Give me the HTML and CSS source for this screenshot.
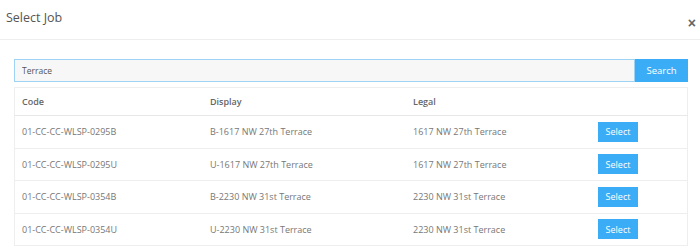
FILE: index.html
```html
<!DOCTYPE html>
<html lang="en">
<head>
    <meta charset="UTF-8">
    <meta name="viewport" content="width=device-width, initial-scale=1.0">
    <title>Select Job</title>
    <link rel="stylesheet" href="styles.css">
</head>
<body>
    <div class="modal">
        <div class="modal-header">
            <h4 class="modal-title">Select Job</h4>
            <button class="close">&times;</button>
        </div>
        <div class="modal-body">
            <div class="search-bar">
                <input class="search-input" type="text" value="Terrace">
                <button class="search-btn">Search</button>
            </div>
            <table class="jobs">
                <thead>
                    <tr>
                        <th class="col-code">Code</th>
                        <th class="col-display">Display</th>
                        <th class="col-legal">Legal</th>
                        <th></th>
                    </tr>
                </thead>
                <tbody>
                    <tr>
                        <td>01-CC-CC-WLSP-0295B</td>
                        <td>B-1617 NW 27th Terrace</td>
                        <td>1617 NW 27th Terrace</td>
                        <td><button class="select-btn">Select</button></td>
                    </tr>
                    <tr>
                        <td>01-CC-CC-WLSP-0295U</td>
                        <td>U-1617 NW 27th Terrace</td>
                        <td>1617 NW 27th Terrace</td>
                        <td><button class="select-btn">Select</button></td>
                    </tr>
                    <tr>
                        <td>01-CC-CC-WLSP-0354B</td>
                        <td>B-2230 NW 31st Terrace</td>
                        <td>2230 NW 31st Terrace</td>
                        <td><button class="select-btn">Select</button></td>
                    </tr>
                    <tr>
                        <td>01-CC-CC-WLSP-0354U</td>
                        <td>U-2230 NW 31st Terrace</td>
                        <td>2230 NW 31st Terrace</td>
                        <td><button class="select-btn">Select</button></td>
                    </tr>
                </tbody>
            </table>
        </div>
    </div>
</body>
</html>
```

FILE: styles.css
```css
body {
    margin: 0;
    background-color: #fff;
    font-family: "Open Sans", Arial, sans-serif;
    color: #777;
}

.modal {
    width: 700px;
}

.modal-header {
    display: flex;
    justify-content: space-between;
    align-items: center;
    height: 39px;
    padding: 0 6px;
    border-bottom: 1px solid #eee;
}

.modal-title {
    margin: 0 0 4px 0;
    font-size: 12.5px;
    font-weight: normal;
    color: #555;
}

.close {
    margin-top: 6px;
    margin-right: -2px;
    padding: 0;
    border: none;
    background: none;
    font-size: 14px;
    font-weight: bold;
    line-height: 1;
    color: #666;
    cursor: pointer;
}

.modal-body {
    padding: 19px 12px 0 14px;
}

.search-bar {
    display: flex;
    height: 23px;
    margin-bottom: 5px;
}

.search-input {
    flex: 1;
    box-sizing: border-box;
    height: 23px;
    margin: 0;
    padding: 0 7px;
    border: 1px solid #9fd3f5;
    background-color: #f7f7f7;
    font-family: inherit;
    font-size: 8.5px;
    color: #555;
    outline: none;
}

.search-btn {
    width: 53px;
    height: 23px;
    margin: 0;
    padding: 0;
    border: none;
    background-color: #3badf7;
    color: #fff;
    font-family: inherit;
    font-size: 9.5px;
    cursor: pointer;
}

.jobs {
    width: 674px;
    border-collapse: collapse;
    border: 1px solid #eee;
    font-size: 9px;
}

.jobs th {
    height: 27px;
    padding: 0 7px;
    text-align: left;
    font-weight: 600;
    color: #666;
    border-bottom: 1px solid #e8e8e8;
}

.jobs td {
    height: 31.5px;
    padding: 0 7px;
    border-bottom: 1px solid #eee;
    vertical-align: middle;
    color: #777;
}

.col-code {
    width: 174px;
}

.col-display {
    width: 189px;
}

.col-legal {
    width: 170px;
}

.select-btn {
    width: 40px;
    height: 20px;
    margin-left: 1px;
    padding: 0;
    border: none;
    background-color: #3badf7;
    color: #fff;
    font-family: inherit;
    font-size: 9px;
    cursor: pointer;
}
```
